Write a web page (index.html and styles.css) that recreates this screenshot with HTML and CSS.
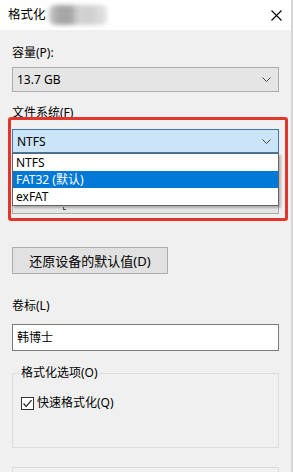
FILE: index.html
```html
<!DOCTYPE html>
<html lang="zh-CN">
  <head>
    <meta charset="UTF-8" />
    <title>格式化</title>
    <link rel="stylesheet" href="styles.css">
  </head>
  <body>
    <div class="window">
      <div class="titlebar">
        <span class="title">格式化</span>
        <span class="title-blur"></span>
        <svg class="close" width="11" height="11" viewBox="0 0 11 11">
          <path d="M0.5 0.5 L10.5 10.5 M10.5 0.5 L0.5 10.5" stroke="#000" stroke-width="1.1" fill="none" />
        </svg>
      </div>

      <div class="content">
        <div class="label first">容量(P):</div>
        <div class="combo combo-capacity">
          <span>13.7 GB</span>
          <svg class="chevron" width="9" height="5" viewBox="0 0 9 5"><path d="M0.5 0.5 L4.5 4.5 L8.5 0.5" stroke="#444" fill="none" /></svg>
        </div>

        <div class="label gap-lg">文件系统(F)</div>
        <div class="combo-wrap">
          <div class="combo combo-focus">
            <span>NTFS</span>
            <svg class="chevron" width="9" height="5" viewBox="0 0 9 5"><path d="M0.5 0.5 L4.5 4.5 L8.5 0.5" stroke="#444" fill="none" /></svg>
          </div>
          <ul class="dropdown">
            <li>NTFS</li>
            <li class="selected">FAT32 (默认)</li>
            <li>exFAT</li>
          </ul>
        </div>

        <!-- allocation unit row, covered by the open list -->
        <div class="label gap-lg hidden-row"></div>
        <div class="combo combo-alloc">
          <span class="peek"></span>
        </div>

        <button class="btn">还原设备的默认值(D)</button>

        <div class="label gap-label">卷标(L)</div>
        <div class="input">韩博士</div>

        <fieldset class="group">
          <legend>格式化选项(O)</legend>
          <label class="check">
            <span class="box">
              <svg width="11" height="11" viewBox="0 0 11 11"><path d="M1.5 5.5 L4.2 8.3 L9.6 2.2" stroke="#222" stroke-width="1.2" fill="none" /></svg>
            </span>
            快速格式化(Q)
          </label>
        </fieldset>

        <div class="group-next"></div>
      </div>

      <div class="highlight"></div>
    </div>
  </body>
</html>
```

FILE: styles.css
```css
* {
  margin: 0;
  padding: 0;
  box-sizing: border-box;
}

body {
  font-family: "Noto Sans", "Noto Sans CJK SC", sans-serif;
  font-size: 12px;
  color: #000;
  background: #d6d6d6;
  width: 293px;
  height: 472px;
  overflow: hidden;
}

.window {
  position: relative;
  width: 291px;
  height: 472px;
  background: #f0f0f0;
  overflow: hidden;
}

.titlebar {
  height: 30px;
  background: #ffffff;
  display: flex;
  align-items: center;
  padding-left: 8px;
}

.title {
  font-size: 12.5px;
  line-height: 18px;
}

.title-blur {
  width: 58px;
  height: 20px;
  margin-left: 3px;
  background: linear-gradient(90deg, #c8c8c8 0%, #a4a4a4 20%, #a8a8a8 38%, #d2d2d2 50%, #cfcfcf 70%, #e4e4e4 100%);
  filter: blur(2px);
  border-radius: 6px;
}

.close {
  margin-left: auto;
  margin-right: 9px;
}

.content {
  padding: 14px 12px 0;
}

.label {
  line-height: 18px;
  height: 18px;
  white-space: nowrap;
}

.gap-lg {
  margin-top: 12px;
}

.gap-label {
  margin-top: 23px;
}

.combo {
  display: flex;
  align-items: center;
  justify-content: space-between;
  height: 25px;
  padding: 0 4px 0 4px;
  background: #e5e5e5;
  border: 1px solid #acacac;
  white-space: nowrap;
}

.chevron {
  margin-right: 3px;
}

.combo-capacity {
  margin-top: 5px;
}

.combo-wrap {
  position: relative;
  margin-top: 7px;
}

.combo-focus {
  height: 24px;
  background: #cce4f7;
  border-color: #3d77ad;
}

.dropdown {
  position: absolute;
  top: 24px;
  left: 0;
  right: 0;
  list-style: none;
  background: #ffffff;
  border: 1px solid #646464;
  box-shadow: 2px 2px 2px rgba(0, 0, 0, 0.25);
  z-index: 2;
}

.dropdown li {
  height: 17px;
  line-height: 17px;
  padding-left: 3px;
  white-space: nowrap;
}

.dropdown li.selected {
  background: #0078d7;
  color: #ffffff;
}

.combo-alloc {
  margin-top: 6px;
  align-items: flex-end;
  padding-bottom: 3px;
}

/* tail of the hidden value that shows under the list */
.peek {
  width: 3px;
  height: 3px;
  margin-left: 46px;
  border-left: 1px solid #555;
  border-bottom: 1px solid #555;
}

.btn {
  display: block;
  margin-top: 33px;
  width: 156px;
  height: 27px;
  font-family: inherit;
  font-size: 13px;
  color: #000;
  background: #e1e1e1;
  border: 1px solid #adadad;
}

.input {
  margin-top: 9px;
  height: 27px;
  line-height: 25px;
  padding-left: 4px;
  background: #ffffff;
  border: 1px solid #7a7a7a;
}

.group {
  margin-top: 13px;
  border: 1px solid #dcdcdc;
  padding: 12px 8px 35px;
}

.group legend {
  line-height: 18px;
  padding: 0 1px;
  margin-left: -1px;
}

.check {
  display: flex;
  align-items: center;
  gap: 3px;
  height: 18px;
  line-height: 18px;
}

.box {
  width: 13px;
  height: 13px;
  border: 1px solid #333;
  background: #ffffff;
  display: flex;
  align-items: center;
  justify-content: center;
}

.group-next {
  margin-top: 19px;
  height: 30px;
  border: 1px solid #dcdcdc;
}

/* red annotation frame drawn over the file system combo */
.highlight {
  position: absolute;
  left: 8px;
  top: 117px;
  width: 280px;
  height: 104px;
  border: 3px solid #e2352b;
  border-radius: 3px;
  z-index: 3;
}
```
